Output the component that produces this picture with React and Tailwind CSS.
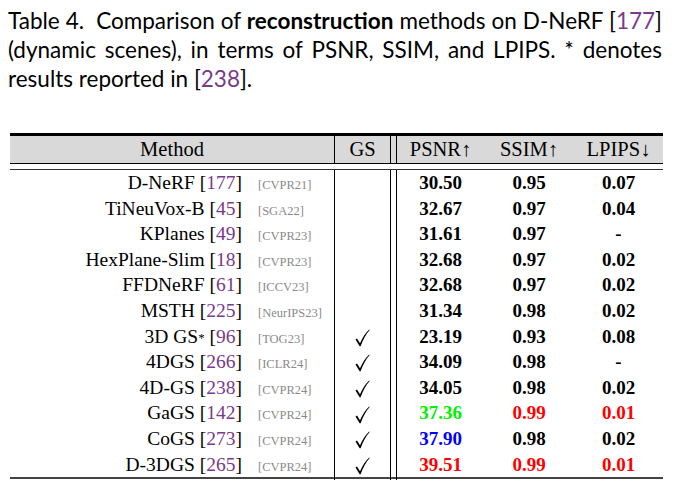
const rows = [
  { name: "D-NeRF", ref: "177", venue: "[CVPR21]", gs: false, psnr: "30.50", ssim: "0.95", lpips: "0.07" },
  { name: "TiNeuVox-B", ref: "45", venue: "[SGA22]", gs: false, psnr: "32.67", ssim: "0.97", lpips: "0.04" },
  { name: "KPlanes", ref: "49", venue: "[CVPR23]", gs: false, psnr: "31.61", ssim: "0.97", lpips: "-" },
  { name: "HexPlane-Slim", ref: "18", venue: "[CVPR23]", gs: false, psnr: "32.68", ssim: "0.97", lpips: "0.02" },
  { name: "FFDNeRF", ref: "61", venue: "[ICCV23]", gs: false, psnr: "32.68", ssim: "0.97", lpips: "0.02" },
  { name: "MSTH", ref: "225", venue: "[NeurIPS23]", gs: false, psnr: "31.34", ssim: "0.98", lpips: "0.02" },
  { name: "3D GS", star: true, ref: "96", venue: "[TOG23]", gs: true, psnr: "23.19", ssim: "0.93", lpips: "0.08" },
  { name: "4DGS", ref: "266", venue: "[ICLR24]", gs: true, psnr: "34.09", ssim: "0.98", lpips: "-" },
  { name: "4D-GS", ref: "238", venue: "[CVPR24]", gs: true, psnr: "34.05", ssim: "0.98", lpips: "0.02" },
  { name: "GaGS", ref: "142", venue: "[CVPR24]", gs: true, psnr: "37.36", psnrC: "text-[#00f000]", ssim: "0.99", ssimC: "text-[#ff0000]", lpips: "0.01", lpipsC: "text-[#ff0000]" },
  { name: "CoGS", ref: "273", venue: "[CVPR24]", gs: true, psnr: "37.90", psnrC: "text-[#0000ff]", ssim: "0.98", lpips: "0.02" },
  { name: "D-3DGS", ref: "265", venue: "[CVPR24]", gs: true, psnr: "39.51", psnrC: "text-[#ff0000]", ssim: "0.99", ssimC: "text-[#ff0000]", lpips: "0.01", lpipsC: "text-[#ff0000]" },
];

const grid = "grid grid-cols-[325px_56px_5px_88px_90px_89px]";

// thin calligraphic tick like the LaTeX \checkmark
function Check() {
  return (
    <svg width="15" height="18" viewBox="0 0 15 18" className="inline-block">
      <path d="M0.5 10.5 L2 9.6 L5 14.2 C7.5 8.5 10.5 3.8 14.2 0.4 L14.7 0.9 C11 5 8 10.5 5.6 17.2 L4.6 17.2 Z" fill="#000" />
    </svg>
  );
}

export default function App() {
  return (
    <div className="w-[678px] h-[492px] bg-white text-black overflow-hidden">
      {/* caption */}
      <div className="px-[8px] pt-[6px] w-[670px] font-['Lato','Open_Sans',sans-serif] text-[22.5px] leading-[29px]">
        <div className="text-justify [text-align-last:justify]">
          Table 4.&nbsp; Comparison of <b>reconstruction</b> methods on D-NeRF [<span className="text-[#7a3a8c]">177</span>]
        </div>
        <div className="text-justify [text-align-last:justify]">
          (dynamic scenes), in terms of PSNR, SSIM, and LPIPS. * denotes
        </div>
        <div>
          results reported in [<span className="text-[#7a3a8c]">238</span>].
        </div>
      </div>

      {/* table */}
      <div className="ml-[10px] mt-[40px] w-[653px] font-['Liberation_Serif',serif]">
        <div className={`${grid} border-t-[3px] border-black bg-[#d9d9d9] h-[31px] border-b border-b-black text-[20.5px] leading-[27px]`}>
          <div className="text-center border-r border-black">Method</div>
          <div className="text-center border-r border-black">GS</div>
          <div />
          <div className="text-center border-l border-black">PSNR↑</div>
          <div className="text-center">SSIM↑</div>
          <div className="text-center">LPIPS↓</div>
        </div>
        <div className="h-[6px] border-b border-[#333]" />

        <div className="border-b-2 border-[#444]">
          {rows.map((r) => (
            <div key={r.name} className={`${grid} h-[25.6px] leading-[25.6px]`}>
              <div className="flex items-baseline border-r border-black">
                <div className="w-[232px] text-right text-[19.5px] whitespace-nowrap">
                  {r.name}
                  {r.star && <sup className="text-[13px] relative -top-[1px]">*</sup>} [<span className="text-[#7a3a8c]">{r.ref}</span>]
                </div>
                <div className="pl-[16px] text-[12.5px] text-[#8a8a8a] whitespace-nowrap">{r.venue}</div>
              </div>
              <div className="flex items-center justify-center border-r border-black">
                {r.gs ? <Check /> : null}
              </div>
              <div />
              <div className={`text-center border-l border-black font-bold text-[19px] ${r.psnrC || ""}`}>{r.psnr}</div>
              <div className={`text-center font-bold text-[19px] ${r.ssimC || ""}`}>{r.ssim}</div>
              <div className={`text-center font-bold text-[19px] ${r.lpipsC || ""}`}>{r.lpips}</div>
            </div>
          ))}
        </div>
      </div>
    </div>
  );
}
